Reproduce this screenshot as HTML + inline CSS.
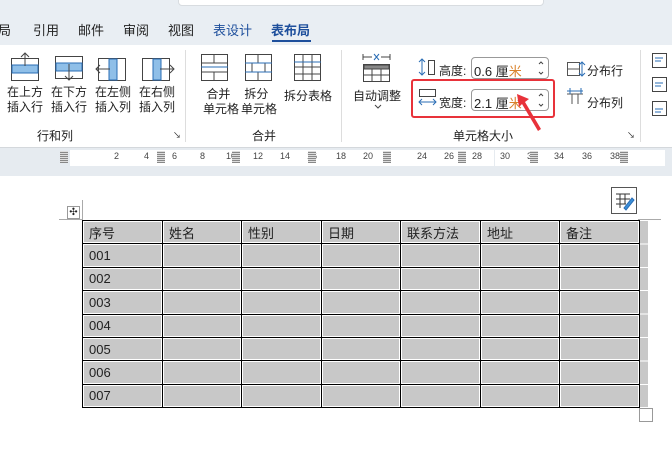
<!DOCTYPE html><html><head><meta charset="utf-8"><style>
*{margin:0;padding:0;box-sizing:border-box}
body{width:672px;height:454px;overflow:hidden;background:#fff;font-family:"Liberation Sans","Noto Sans CJK SC",sans-serif;position:relative;color:#222}
.a{position:absolute}
.t{font-size:12px;white-space:nowrap}
td{border:1px solid #000;height:23.4px;background:#c8c8c8;font-size:13px;padding:0 0 0 6px;box-shadow:inset 0 0 0 1px #fff;color:#222}
.rb{position:absolute;top:151px;width:8px;height:12px;background:repeating-linear-gradient(0deg,#888 0 1px,#ddd 1px 2px)}
</style></head><body>
<div class="a" style="left:0;top:0;width:672px;height:45px;background:#e9eef3"></div>
<div class="a" style="left:178px;top:-6px;width:366px;height:12px;background:#fff;border:1px solid #d8dce0;border-radius:4px"></div>
<div class="a t" style="top:20px;left:-2px;font-size:13px">局</div>
<div class="a t" style="top:20px;left:33px;font-size:13px">引用</div>
<div class="a t" style="top:20px;left:78px;font-size:13px">邮件</div>
<div class="a t" style="top:20px;left:123px;font-size:13px">审阅</div>
<div class="a t" style="top:20px;left:168px;font-size:13px">视图</div>
<div class="a t" style="top:20px;left:213px;font-size:13px;color:#1e4f9c">表设计</div>
<div class="a t" style="top:20px;left:271px;font-size:13px;color:#1e4f9c;font-weight:bold">表布局</div>
<div class="a" style="left:272px;top:40px;width:39px;height:2px;background:#1e4f9c"></div>
<div class="a" style="left:0;top:45px;width:672px;height:102px;background:#fff"></div>
<div class="a" style="left:185px;top:50px;width:1px;height:92px;background:#ddd"></div>
<div class="a" style="left:341px;top:50px;width:1px;height:92px;background:#ddd"></div>
<div class="a" style="left:640px;top:50px;width:1px;height:92px;background:#ddd"></div>
<svg class="a" style="left:10px;top:52px" width="165" height="30">
<g fill="none" stroke="#444"><rect x="1.5" y="6.5" width="27" height="22"/><rect x="45.5" y="4.5" width="27" height="22"/><rect x="88.5" y="6.5" width="27" height="22"/><rect x="132.5" y="6.5" width="27" height="22"/></g>
<rect x="2" y="13" width="26" height="8" fill="#8fbfe8" stroke="#2a6db5"/><rect x="46" y="11" width="26" height="8" fill="#8fbfe8" stroke="#2a6db5"/>
<rect x="99" y="7" width="8" height="21" fill="#8fbfe8" stroke="#2a6db5"/><rect x="143" y="7" width="8" height="21" fill="#8fbfe8" stroke="#2a6db5"/>
<g stroke="#444" fill="none"><path d="M15 14V1M11 5l4-4 4 4M59 12v16M55 24l4 4 4-4M100 17H86M90 13l-4 4 4 4M150 17h14M160 13l4 4-4 4"/></g></svg>
<div class="a t" style="left:7px;top:85px;line-height:15px">在上方<br>插入行</div>
<div class="a t" style="left:51px;top:85px;line-height:15px">在下方<br>插入行</div>
<div class="a t" style="left:95px;top:85px;line-height:15px">在左侧<br>插入列</div>
<div class="a t" style="left:139px;top:85px;line-height:15px">在右侧<br>插入列</div>
<div class="a t" style="left:37px;top:127px">行和列</div>
<div class="a t" style="left:173px;top:130px;font-size:8px">↘</div>
<svg class="a" style="left:200px;top:53px" width="125" height="30" fill="none" stroke="#444">
<rect x="1.5" y="1.5" width="26" height="26"/><path d="M1 10h27M1 19h27M14 1v9M14 19v9"/><path d="M1 14h27" stroke="#2a6db5"/>
<rect x="45.5" y="1.5" width="26" height="26"/><path d="M45 10h27M45 19h27M58 1v9M58 19v9M52 10v9M65 10v9"/><path d="M45 10h27M45 19h27" stroke="#2a6db5"/>
<rect x="94.5" y="1.5" width="26" height="26"/><path d="M94 14h27M94 21h27M103 1v27M112 1v27"/><path d="M94 9h27" stroke="#2a6db5"/></svg>
<div class="a t" style="left:203px;top:87px;line-height:15px">&nbsp;合并<br>单元格</div>
<div class="a t" style="left:241px;top:87px;line-height:15px">&nbsp;拆分<br>单元格</div>
<div class="a t" style="left:284px;top:87px">拆分表格</div>
<div class="a t" style="left:252px;top:127px">合并</div>
<svg class="a" style="left:362px;top:53px" width="30" height="30" fill="none" stroke="#444"><path d="M1 1v6M28 1v6M1 4h9M19 4h9"/><path d="M12 1l5 6M17 1l-5 6" stroke="#2a6db5"/><rect x="1.5" y="11.5" width="26" height="17"/><rect x="2" y="12" width="25" height="4" fill="#888"/><path d="M1 22h27M10 16v13M19 16v13"/></svg>
<div class="a t" style="left:353px;top:87px">自动调整</div>
<svg class="a" style="left:374px;top:104px" width="8" height="5" fill="none" stroke="#444"><path d="M1 1l3 3 3-3"/></svg>
<svg class="a" style="left:418px;top:58px" width="20" height="60" fill="none"><path d="M4 1v16M1 4l3-3 3 3M1 14l3 3 3-3" stroke="#2a6db5"/><rect x="10.5" y="2.5" width="6" height="14" stroke="#444"/><rect x="1.5" y="31.5" width="16" height="7" stroke="#444"/><path d="M1 44h17M4 41l-3 3 3 3M15 41l3 3-3 3" stroke="#2a6db5"/></svg>
<div class="a t" style="left:439px;top:62px">高度:</div>
<div class="a" style="left:471px;top:57px;width:78px;height:22px;border:1px solid #999;border-radius:4px"></div>
<div class="a t" style="left:474px;top:61px;font-size:13px">0.6 厘<span style="color:#d9822b">米</span></div>
<svg class="a" style="left:537px;top:60px" width="8" height="16" fill="none" stroke="#444"><path d="M2 4l2-2 2 2M2 12l2 2 2-2"/></svg>
<div class="a" style="left:411px;top:79px;width:144px;height:39px;border:2px solid #e8323a;border-radius:3px"></div>
<div class="a t" style="left:439px;top:94px">宽度:</div>
<div class="a" style="left:471px;top:89px;width:78px;height:22px;border:1px solid #999;border-radius:4px"></div>
<div class="a t" style="left:474px;top:93px;font-size:13px">2.1 厘<span style="color:#d9822b">米</span></div>
<svg class="a" style="left:537px;top:92px" width="8" height="16" fill="none" stroke="#444"><path d="M2 4l2-2 2 2M2 12l2 2 2-2"/></svg>
<svg class="a" style="left:512px;top:93px" width="30" height="48"><path d="M5 1l12 5-4 3 16 27-3 2-16-27-3 3z" fill="#e8323a"/></svg>
<div class="a t" style="left:453px;top:127px">单元格大小</div>
<div class="a t" style="left:627px;top:130px;font-size:8px">↘</div>
<svg class="a" style="left:566px;top:61px" width="20" height="48" fill="none" stroke="#555"><rect x="1.5" y="1.5" width="12" height="13"/><path d="M1 8h13"/><path d="M16 1v14M13 4l3-3 3 3M13 12l3 3 3-3" stroke="#2a6db5"/><path d="M1 33h16M6 33v10M12 33v10"/><path d="M1 30h16M4 27v6M15 27v6" stroke="#2a6db5"/></svg>
<div class="a t" style="left:587px;top:62px">分布行</div>
<div class="a t" style="left:587px;top:94px">分布列</div>
<svg class="a" style="left:651px;top:52px" width="21" height="65" fill="none"><rect x="1.5" y="1.5" width="14" height="14" stroke="#444"/><path d="M4 6h8M4 9h6" stroke="#2a6db5"/><rect x="1.5" y="25.5" width="14" height="14" stroke="#444"/><path d="M4 31h8M4 34h6" stroke="#2a6db5"/><rect x="1.5" y="49.5" width="14" height="14" stroke="#444"/><path d="M4 57h8M4 60h6" stroke="#2a6db5"/></svg>
<div class="a" style="left:0;top:147px;width:672px;height:29px;background:#e6ebf0;border-top:1px solid #d4d8dc"></div>
<div class="a" style="left:70px;top:150px;width:424px;height:16px;background:#fff"></div>
<div class="a" style="left:495px;top:150px;width:170px;height:16px;background:#fff"></div>
<div class="a" style="left:60px;top:151px;width:600px;font-size:9px;color:#444;height:14px">
<span class="a" style="left:54px">2</span><span class="a" style="left:84px">4</span><span class="a" style="left:112px">6</span><span class="a" style="left:140px">8</span><span class="a" style="left:166px">10</span><span class="a" style="left:193px">12</span><span class="a" style="left:220px">14</span><span class="a" style="left:247px">16</span><span class="a" style="left:276px">18</span><span class="a" style="left:303px">20</span><span class="a" style="left:357px">24</span><span class="a" style="left:384px">26</span><span class="a" style="left:412px">28</span><span class="a" style="left:440px">30</span><span class="a" style="left:467px">32</span><span class="a" style="left:494px">34</span><span class="a" style="left:522px">36</span><span class="a" style="left:550px">38</span></div>
<div class="rb" style="left:60px"></div><div class="rb" style="left:157px"></div><div class="rb" style="left:232px"></div><div class="rb" style="left:308px"></div><div class="rb" style="left:383px"></div><div class="rb" style="left:458px"></div><div class="rb" style="left:530px"></div><div class="rb" style="left:620px"></div>
<div class="a" style="left:59px;top:219px;width:23px;height:1px;background:#aaa"></div>
<div class="a" style="left:82px;top:200px;width:1px;height:20px;background:#aaa"></div>
<div class="a" style="left:638px;top:219px;width:23px;height:1px;background:#aaa"></div>
<div class="a" style="left:67px;top:206px;width:13px;height:13px;border:1px solid #999;font-size:10px;line-height:11px;text-align:center">✣</div>
<div class="a" style="left:611px;top:187px;width:26px;height:27px;border:1px solid #555;background:#fff"></div>
<svg class="a" style="left:614px;top:191px" width="22" height="20" fill="none" stroke="#333"><path d="M2 3h14M2 8h14M2 13h10M6 3v14M11 3v10"/><path d="M10 17l8-10 2 2-8 10z" fill="#3b8fd8" stroke="#2a6db5"/></svg>
<div class="a" style="left:639px;top:221px;width:9px;height:187px;background:repeating-linear-gradient(180deg,#c8c8c8 0 22.4px,#fff 22.4px 23.4px)"></div>
<div class="a" style="left:639px;top:408px;width:14px;height:14px;border:1px solid #999"></div>
<table class="a" style="left:82px;top:220px;width:557px;border-collapse:collapse;table-layout:fixed">
<colgroup><col style="width:80px"><col style="width:79px"><col style="width:80px"><col style="width:79px"><col style="width:80px"><col style="width:79px"><col style="width:80px"></colgroup>
<tr><td>序号</td><td>姓名</td><td>性别</td><td>日期</td><td>联系方法</td><td>地址</td><td>备注</td></tr>
<tr><td>001</td><td></td><td></td><td></td><td></td><td></td><td></td></tr>
<tr><td>002</td><td></td><td></td><td></td><td></td><td></td><td></td></tr>
<tr><td>003</td><td></td><td></td><td></td><td></td><td></td><td></td></tr>
<tr><td>004</td><td></td><td></td><td></td><td></td><td></td><td></td></tr>
<tr><td>005</td><td></td><td></td><td></td><td></td><td></td><td></td></tr>
<tr><td>006</td><td></td><td></td><td></td><td></td><td></td><td></td></tr>
<tr><td>007</td><td></td><td></td><td></td><td></td><td></td><td></td></tr>
</table>
</body></html>
